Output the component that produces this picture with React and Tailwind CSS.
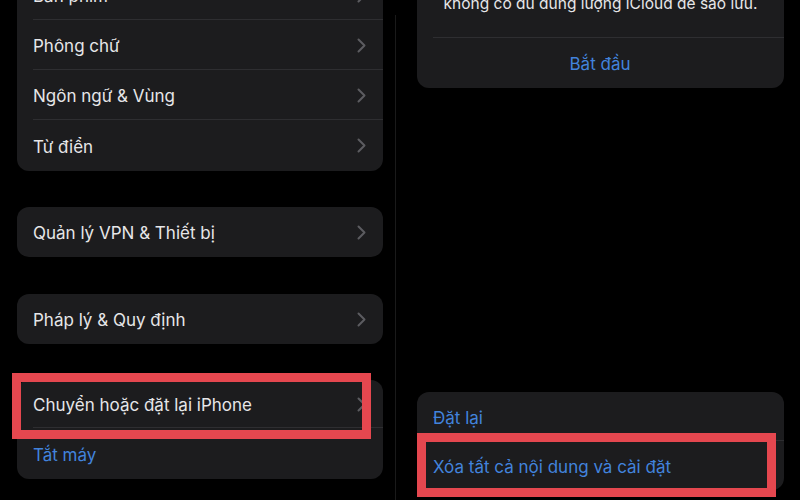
const font = {fontFamily: "Inter, 'Noto Sans', sans-serif"};

// Chevron drawn like iOS disclosure indicator
function Chevron() {
    return (
        <svg width="9" height="15" viewBox="0 0 9 15" className="shrink-0">
            <polyline
                points="1.5,1.5 7.5,7.5 1.5,13.5"
                fill="none"
                stroke="#5c5c60"
                strokeWidth="2"
                strokeLinecap="round"
                strokeLinejoin="round"
            />
        </svg>
    );
}

function Row({label, last, chevron = true, blue, center, h = "h-[50px]"}) {
    return (
        <div className={`relative flex items-center ${h} pl-4 pr-[17px]`}>
            <span
                className={`flex-1 pt-1 text-[17px] ${
                    blue ? "text-[#4283dc]" : "text-[#e6e6e8]"
                } ${center ? "text-center" : ""}`}
            >
                {label}
            </span>
            {chevron && <Chevron />}
            {!last && (
                <div className="absolute bottom-0 left-4 right-0 h-px bg-[#2e2e31]" />
            )}
        </div>
    );
}

function Card({children, className = ""}) {
    return (
        <div className={`rounded-[12px] bg-[#1c1c1e] overflow-hidden ${className}`}>
            {children}
        </div>
    );
}

function Highlight({className}) {
    return (
        <div
            className={`absolute border-[9px] border-[#e5474f] pointer-events-none ${className}`}
        />
    );
}

export default function App() {
    return (
        <div
            className="relative w-[800px] h-[500px] overflow-hidden bg-black flex"
            style={font}
        >
            {/* left column */}
            <div className="w-[395px] shrink-0 pl-[17px] pr-[12px] flex flex-col">
                <Card className="-mt-[30px]">
                    <Row label="Bàn phím" />
                    <Row label="Phông chữ" />
                    <Row label="Ngôn ngữ & Vùng" />
                    <Row label="Từ điển" last h="h-[51px]" />
                </Card>
                <Card className="mt-[36px]">
                    <Row label="Quản lý VPN & Thiết bị" last />
                </Card>
                <Card className="mt-[37px]">
                    <Row label="Pháp lý & Quy định" last />
                </Card>
                <Card className="mt-[36px]">
                    <Row label="Chuyển hoặc đặt lại iPhone" h="h-[48px]" />
                    <Row label="Tắt máy" blue chevron={false} last h="h-[51px]" />
                </Card>
            </div>

            {/* split view divider */}
            <div className="w-px mt-[15px] bg-[#1a1a1a]" />

            {/* right column */}
            <div className="flex-1 pl-[21px] pr-[16px] flex flex-col">
                <Card className="-mt-[20px]">
                    <div className="relative h-[58px] flex items-center justify-center">
                        <span className="text-[15.5px] text-[#e6e6e8] -mt-[10px]">
                            không có đủ dung lượng iCloud để sao lưu.
                        </span>
                        <div className="absolute bottom-0 left-4 right-0 h-px bg-[#2e2e31]" />
                    </div>
                    <Row label="Bắt đầu" blue center chevron={false} last />
                </Card>
                <Card className="mt-[304px]">
                    <Row label="Đặt lại" blue chevron={false} h="h-[49px]" />
                    <Row
                        label="Xóa tất cả nội dung và cài đặt"
                        blue
                        chevron={false}
                        last
                        h="h-[49px]"
                    />
                </Card>
            </div>

            {/* annotation boxes */}
            <Highlight className="left-[12px] top-[373px] w-[359px] h-[66px]" />
            <Highlight className="left-[417px] top-[433px] w-[359px] h-[64px]" />
        </div>
    );
}
